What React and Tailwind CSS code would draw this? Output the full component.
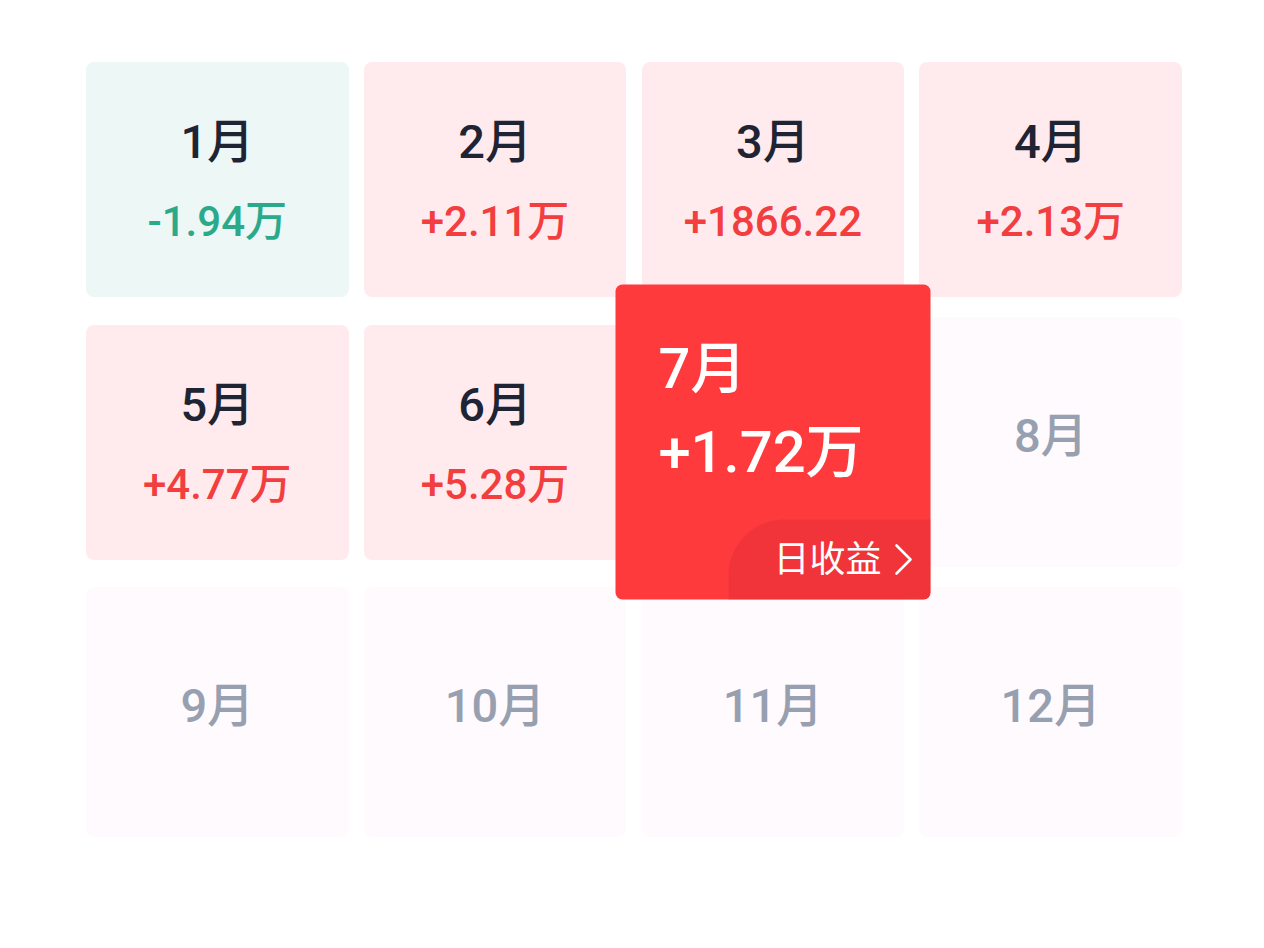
const months = [
  [
    { m: '1月', v: '-1.94万', t: 'down' },
    { m: '2月', v: '+2.11万', t: 'up' },
    { m: '3月', v: '+1866.22', t: 'up' },
    { m: '4月', v: '+2.13万', t: 'up' },
  ],
  [
    { m: '5月', v: '+4.77万', t: 'up' },
    { m: '6月', v: '+5.28万', t: 'up' },
    { m: '7月', v: '+1.72万', t: 'active' },
    { m: '8月' },
  ],
  [{ m: '9月' }, { m: '10月' }, { m: '11月' }, { m: '12月' }],
]

function MonthCell({ item }) {
  if (item.t === 'active') {
    return (
      <div className="relative h-[250px]">
        <div className="absolute left-1/2 top-1/2 -translate-x-1/2 -translate-y-1/2 w-[315px] h-[315px] rounded-[7px] bg-[#fe3a3c] overflow-hidden z-10 text-white">
          <div className="flex flex-col pl-[43px] pt-[44px]">
            <span className="text-[56px] leading-[80px] font-medium">{item.m}</span>
            <span className="text-[58px] leading-[86px] font-medium">{item.v}</span>
          </div>
          <div className="absolute right-0 bottom-0 w-[202px] h-[80px] rounded-tl-[56px] bg-[#f1343a] flex items-center justify-end pr-[17px] gap-[12px]">
            <span className="text-[36px] leading-none">日收益</span>
            <svg width="20" height="32" viewBox="0 0 20 32" fill="none" stroke="white" strokeWidth="2.6" strokeLinecap="round" strokeLinejoin="round">
              <path d="M3 2 L17 16 L3 30" />
            </svg>
          </div>
        </div>
      </div>
    )
  }
  if (!item.v) {
    return (
      <div className="h-[250px] rounded-[8px] bg-[#fffafd] flex items-center justify-center pb-[14px]">
        <span className="text-[47px] font-medium text-[#97a0b0] leading-none">{item.m}</span>
      </div>
    )
  }
  const bg = item.t === 'down' ? 'bg-[#edf7f6]' : 'bg-[#ffebee]'
  const color = item.t === 'down' ? 'text-[#2aaa8a]' : 'text-[#f23e3e]'
  return (
    <div className="h-[250px] flex items-center">
      <div className={`w-full h-[235px] rounded-[8px] ${bg} flex flex-col items-center pt-[52px]`}>
        <span className="text-[47px] leading-[56px] font-medium text-[#1e2433]">{item.m}</span>
        <span className={`text-[42px] leading-[56px] font-medium mt-[24px] ${color}`}>{item.v}</span>
      </div>
    </div>
  )
}

export default function App() {
  return (
    <div className="w-[1264px] h-[948px] bg-white font-['Roboto','Noto_Sans_CJK_SC',sans-serif]">
      <div className="ml-[86px] w-[1096px] pt-[54px] flex flex-col">
        {months.map((row, i) => (
          <div key={i} className={`grid grid-cols-4 gap-x-[15.33px] ${i === 1 ? 'mt-[13px]' : i === 2 ? 'mt-[20px]' : ''}`}>
            {row.map(item => (
              <MonthCell key={item.m} item={item} />
            ))}
          </div>
        ))}
      </div>
    </div>
  )
}
